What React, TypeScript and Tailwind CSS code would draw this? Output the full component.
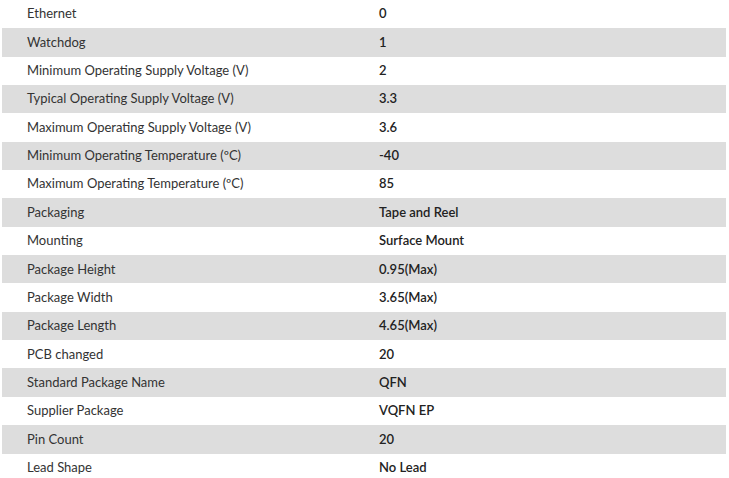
const rows: [string, string][] = [
  ["Ethernet", "0"],
  ["Watchdog", "1"],
  ["Minimum Operating Supply Voltage (V)", "2"],
  ["Typical Operating Supply Voltage (V)", "3.3"],
  ["Maximum Operating Supply Voltage (V)", "3.6"],
  ["Minimum Operating Temperature (ºC)", "-40"],
  ["Maximum Operating Temperature (ºC)", "85"],
  ["Packaging", "Tape and Reel"],
  ["Mounting", "Surface Mount"],
  ["Package Height", "0.95(Max)"],
  ["Package Width", "3.65(Max)"],
  ["Package Length", "4.65(Max)"],
  ["PCB changed", "20"],
  ["Standard Package Name", "QFN"],
  ["Supplier Package", "VQFN EP"],
  ["Pin Count", "20"],
  ["Lead Shape", "No Lead"],
]

export default function App() {
  return (
    <div className="w-[729px] bg-white px-[2px] font-['Lato',sans-serif] text-[13px]">
      {rows.map(([label, value], i) => (
        <div
          key={label}
          className={`grid h-[28.35px] w-[724px] grid-cols-[351px_1fr] items-center ${i % 2 === 1 ? "bg-[#dddddd]" : "bg-white"}`}
        >
          <div className="pl-[25px] text-[#333333]">{label}</div>
          <div className="pl-[26px] font-semibold text-[#222222]">{value}</div>
        </div>
      ))}
    </div>
  )
}
